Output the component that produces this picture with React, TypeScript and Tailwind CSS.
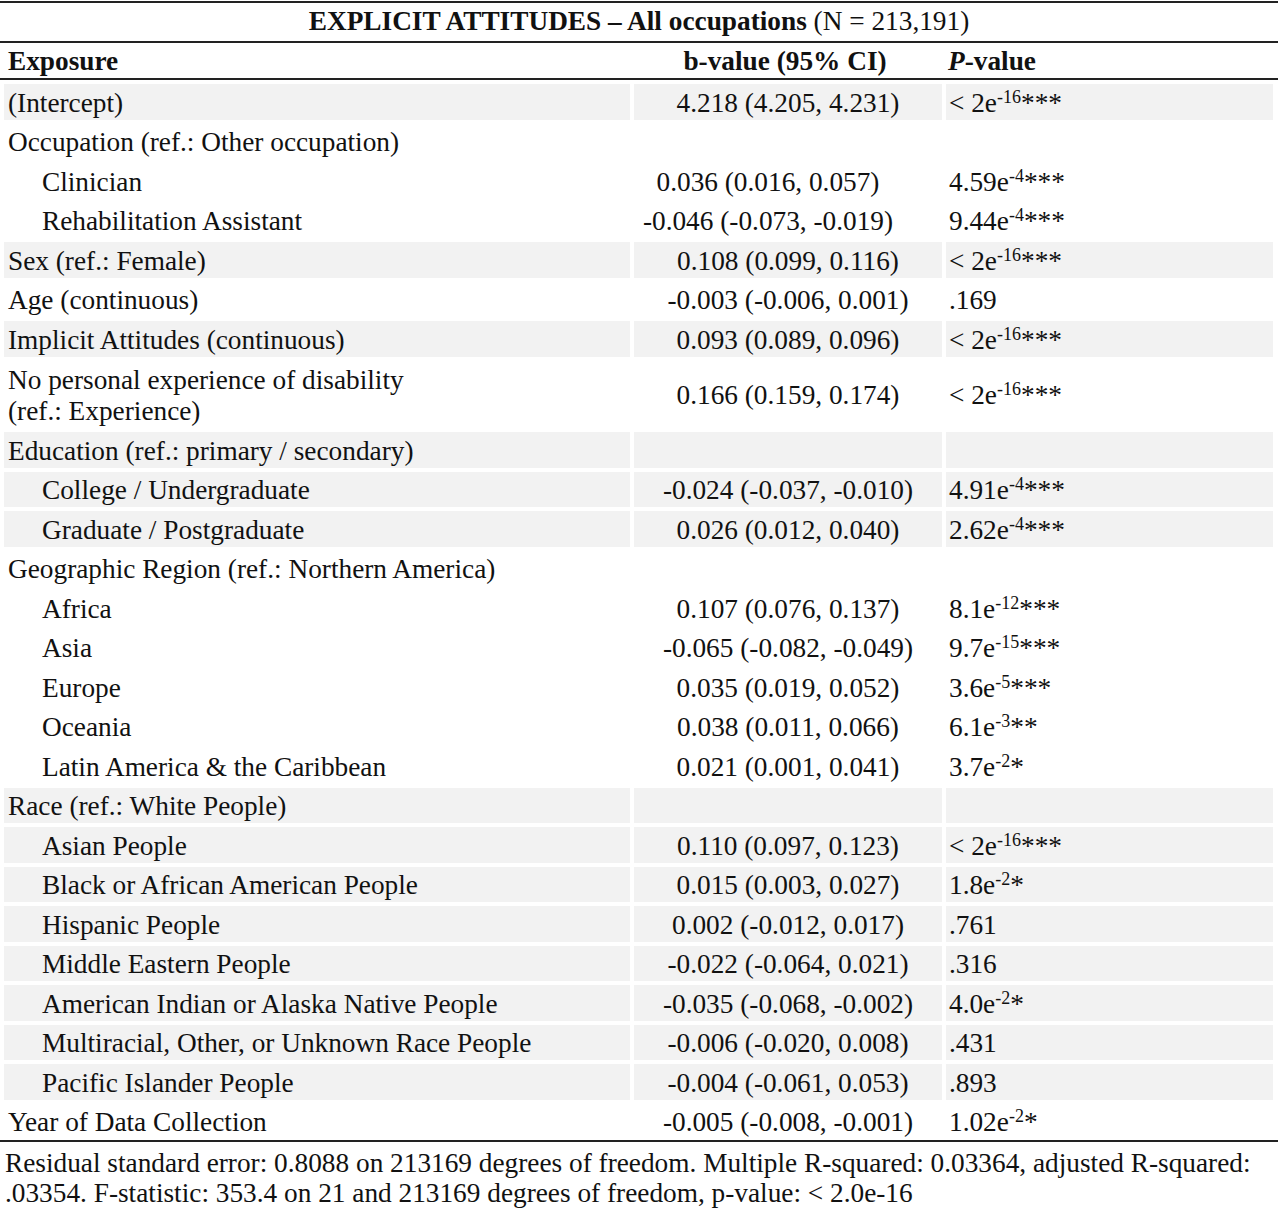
import React from "react";

type Row = {
  label: React.ReactNode;
  indent?: boolean;
  b?: string;
  p?: [string, string, string] | string;
  shade?: boolean;
  shift?: boolean;
  tall?: boolean;
};

const rows: Row[] = [
  { label: "(Intercept)", b: "4.218 (4.205, 4.231)", p: ["< 2e", "-16", "***"], shade: true },
  { label: "Occupation (ref.: Other occupation)" },
  { label: "Clinician", indent: true, b: "0.036 (0.016, 0.057)", p: ["4.59e", "-4", "***"], shift: true },
  { label: "Rehabilitation Assistant", indent: true, b: "-0.046 (-0.073, -0.019)", p: ["9.44e", "-4", "***"], shift: true },
  { label: "Sex (ref.: Female)", b: "0.108 (0.099, 0.116)", p: ["< 2e", "-16", "***"], shade: true },
  { label: "Age (continuous)", b: "-0.003 (-0.006, 0.001)", p: ".169" },
  { label: "Implicit Attitudes (continuous)", b: "0.093 (0.089, 0.096)", p: ["< 2e", "-16", "***"], shade: true },
  {
    label: (
      <>
        No personal experience of disability
        <br />
        (ref.: Experience)
      </>
    ),
    b: "0.166 (0.159, 0.174)",
    p: ["< 2e", "-16", "***"],
    tall: true,
  },
  { label: "Education (ref.: primary / secondary)", shade: true },
  { label: "College / Undergraduate", indent: true, b: "-0.024 (-0.037, -0.010)", p: ["4.91e", "-4", "***"], shade: true },
  { label: "Graduate / Postgraduate", indent: true, b: "0.026 (0.012, 0.040)", p: ["2.62e", "-4", "***"], shade: true },
  { label: "Geographic Region (ref.: Northern America)" },
  { label: "Africa", indent: true, b: "0.107 (0.076, 0.137)", p: ["8.1e", "-12", "***"] },
  { label: "Asia", indent: true, b: "-0.065 (-0.082, -0.049)", p: ["9.7e", "-15", "***"] },
  { label: "Europe", indent: true, b: "0.035 (0.019, 0.052)", p: ["3.6e", "-5", "***"] },
  { label: "Oceania", indent: true, b: "0.038 (0.011, 0.066)", p: ["6.1e", "-3", "**"] },
  { label: "Latin America & the Caribbean", indent: true, b: "0.021 (0.001, 0.041)", p: ["3.7e", "-2", "*"] },
  { label: "Race (ref.: White People)", shade: true },
  { label: "Asian People", indent: true, b: "0.110 (0.097, 0.123)", p: ["< 2e", "-16", "***"], shade: true },
  { label: "Black or African American People", indent: true, b: "0.015 (0.003, 0.027)", p: ["1.8e", "-2", "*"], shade: true },
  { label: "Hispanic People", indent: true, b: "0.002 (-0.012, 0.017)", p: ".761", shade: true },
  { label: "Middle Eastern People", indent: true, b: "-0.022 (-0.064, 0.021)", p: ".316", shade: true },
  { label: "American Indian or Alaska Native People", indent: true, b: "-0.035 (-0.068, -0.002)", p: ["4.0e", "-2", "*"], shade: true },
  { label: "Multiracial, Other, or Unknown Race People", indent: true, b: "-0.006 (-0.020, 0.008)", p: ".431", shade: true },
  { label: "Pacific Islander People", indent: true, b: "-0.004 (-0.061, 0.053)", p: ".893", shade: true },
  { label: "Year of Data Collection", b: "-0.005 (-0.008, -0.001)", p: ["1.02e", "-2", "*"] },
];

function PVal({ p }: { p: Row["p"] }) {
  if (!p) return null;
  if (typeof p === "string") return <>{p}</>;
  return (
    <>
      {p[0]}
      <sup className="text-[18px] leading-none relative -top-[0.5em] align-baseline">{p[1]}</sup>
      {p[2]}
    </>
  );
}

export default function App() {
  return (
    <div
      className="w-[1280px] bg-white text-[#111] text-[27.3px] pt-[1px]"
      style={{ fontFamily: '"Liberation Serif", "Times New Roman", serif' }}
    >
      <div className="w-[1278px] border-t-2 border-[#222]" />
      <div className="w-[1278px] h-[38px] flex items-center justify-center leading-none whitespace-nowrap">
        <span className="font-bold">EXPLICIT ATTITUDES – All occupations</span>
        <span>&nbsp;(N = 213,191)</span>
      </div>
      <div className="w-[1278px] border-t-2 border-[#222]" />
      <div className="ml-[4px] grid grid-cols-[626px_308px_327px] gap-x-[4px] h-[35px] pt-[3px] items-center font-bold leading-none">
        <div className="pl-[4px]">Exposure</div>
        <div className="text-center pr-[6px]">b-value (95% CI)</div>
        <div className="pl-[2px]">
          <span className="italic">P</span>-value
        </div>
      </div>
      <div className="w-[1278px] border-t-2 border-[#222]" />
      <div className="ml-[4px] pt-[4px] grid grid-cols-[626px_308px_327px] gap-x-[4px] gap-y-[4px]">
        {rows.map((r, i) => {
          const h = r.tall ? "h-[67.5px]" : "h-[35.5px]";
          const bg = r.shade ? "bg-[#f2f2f2]" : "";
          return (
            <React.Fragment key={i}>
              <div
                className={`${h} ${bg} flex items-center pt-[3px] leading-[31px] whitespace-nowrap ${
                  r.indent ? "pl-[38px]" : "pl-[4px]"
                }`}
              >
                <div>{r.label}</div>
              </div>
              <div
                className={`${h} ${bg} flex items-center justify-center pt-[3px] leading-none whitespace-nowrap ${
                  r.shift ? "pr-[40px]" : ""
                }`}
              >
                {r.b}
              </div>
              <div className={`${h} ${bg} flex items-center pt-[3px] pl-[3px] leading-none whitespace-nowrap`}>
                <span>
                  <PVal p={r.p} />
                </span>
              </div>
            </React.Fragment>
          );
        })}
      </div>
      <div className="mt-[1px] w-[1278px] border-t-2 border-[#222]" />
      <div className="mt-[6px] pl-[5px] leading-[30px] whitespace-nowrap">
        Residual standard error: 0.8088 on 213169 degrees of freedom. Multiple R-squared: 0.03364, adjusted R-squared:
        <br />
        .03354. F-statistic: 353.4 on 21 and 213169 degrees of freedom, p-value: &lt; 2.0e-16
      </div>
    </div>
  );
}
